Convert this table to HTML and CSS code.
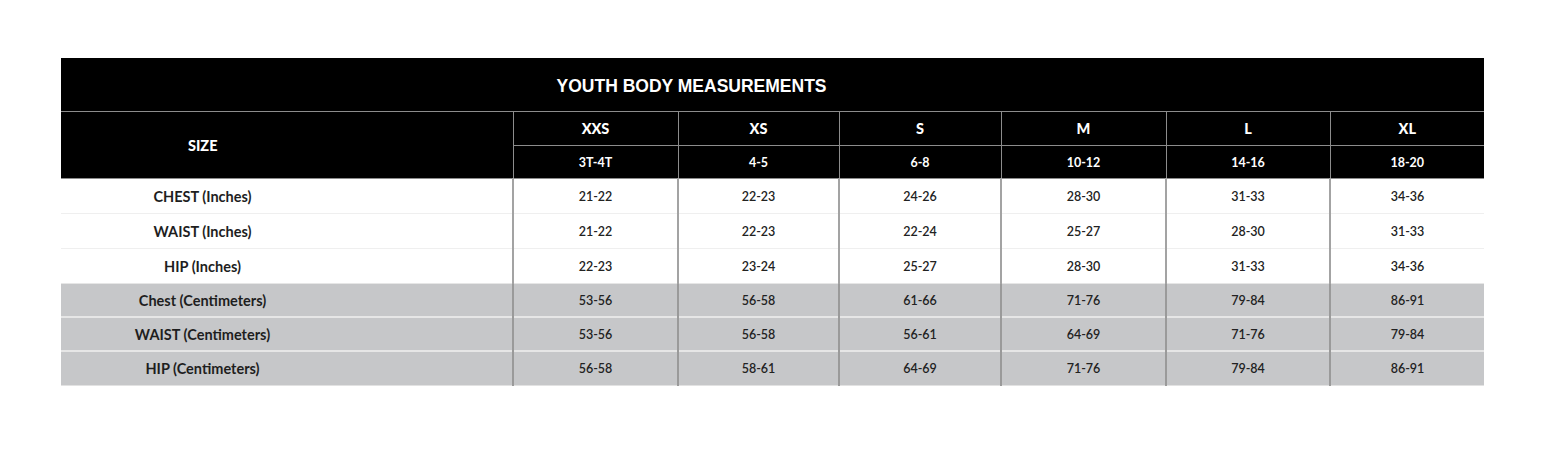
FILE: index.html
```html
<!DOCTYPE html>
<html>
<head>
<meta charset="utf-8">
<link rel="stylesheet" href="styles.css">
</head>
<body>
<div class="page">
<table class="chart">
  <colgroup>
    <col class="c-label">
    <col class="c-xxs">
    <col class="c-xs">
    <col class="c-s">
    <col class="c-m">
    <col class="c-l">
    <col class="c-xl">
  </colgroup>
  <thead>
    <tr class="title-row"><th colspan="7" class="title"><span class="title-text">YOUTH BODY MEASUREMENTS</span></th></tr>
    <tr class="size-row">
      <th rowspan="2" class="size-label">SIZE</th>
      <th>XXS</th><th>XS</th><th>S</th><th>M</th><th>L</th><th>XL</th>
    </tr>
    <tr class="age-row">
      <th>3T-4T</th><th>4-5</th><th>6-8</th><th>10-12</th><th>14-16</th><th>18-20</th>
    </tr>
  </thead>
  <tbody>
    <tr class="in"><th>CHEST (Inches)</th><td>21-22</td><td>22-23</td><td>24-26</td><td>28-30</td><td>31-33</td><td>34-36</td></tr>
    <tr class="in"><th>WAIST (Inches)</th><td>21-22</td><td>22-23</td><td>22-24</td><td>25-27</td><td>28-30</td><td>31-33</td></tr>
    <tr class="in"><th>HIP (Inches)</th><td>22-23</td><td>23-24</td><td>25-27</td><td>28-30</td><td>31-33</td><td>34-36</td></tr>
    <tr class="cm"><th>Chest (Centimeters)</th><td>53-56</td><td>56-58</td><td>61-66</td><td>71-76</td><td>79-84</td><td>86-91</td></tr>
    <tr class="cm"><th>WAIST (Centimeters)</th><td>53-56</td><td>56-58</td><td>56-61</td><td>64-69</td><td>71-76</td><td>79-84</td></tr>
    <tr class="cm"><th>HIP (Centimeters)</th><td>56-58</td><td>58-61</td><td>64-69</td><td>71-76</td><td>79-84</td><td>86-91</td></tr>
  </tbody>
</table>
</div>
</body>
</html>
```
FILE: styles.css
```css
html, body {
  margin: 0;
  padding: 0;
  background: #ffffff;
}
.page {
  padding: 58px 0 0 61px;
}
.chart {
  border-collapse: collapse;
  table-layout: fixed;
  width: 1423px;
  font-family: Lato, "Noto Sans", sans-serif;
  color: #222222;
}
.c-label { width: 452px; }
.c-xxs { width: 165px; }
.c-xs { width: 161px; }
.c-s { width: 162px; }
.c-m { width: 165px; }
.c-l { width: 164px; }
.c-xl { width: 154px; }

.chart th, .chart td {
  padding: 0;
  text-align: center;
  vertical-align: middle;
}

/* header */
.title-row .title {
  background: #000000;
  height: 53px;
  border-bottom: 1px solid #8c8c8c;
  color: #ffffff;
  font-family: "Liberation Sans", Arial, sans-serif;
  font-weight: 700;
  font-size: 17.5px;
  letter-spacing: 0;
  padding-right: 162px;
}
.title-text {
  position: relative;
  top: 2px;
}
.size-row th, .age-row th {
  background: #000000;
  color: #ffffff;
  font-weight: 700;
  border: 1px solid #8c8c8c;
  border-top: none;
}
.size-row th {
  height: 33px;
  font-size: 14.5px;
  font-weight: 900;
}
.age-row th {
  height: 32px;
  font-size: 12.5px;
}
.size-row .size-label {
  border-left: none;
  font-size: 14.5px;
  font-weight: 900;
  padding-right: 168px;
}
.size-row th:last-child, .age-row th:last-child {
  border-right: none;
}

/* body */
.chart tbody th {
  font-weight: 700;
  font-size: 14.5px;
  color: #1e1e1e;
  height: 34px;
  padding-right: 168px;
}
.chart tbody td {
  font-weight: 600;
  font-size: 12.5px;
  color: #222222;
  border-left: 2px solid #a3a3a3;
  height: 34px;
}
.chart tbody tr.in th, .chart tbody tr.in td {
  background: #ffffff;
  border-top: 1px solid #efefef;
}
.chart tbody tr.in:first-child th, .chart tbody tr.in:first-child td {
  border-top: none;
}
.chart tbody tr.cm th, .chart tbody tr.cm td {
  background: #c6c7c9;
  border-top: 2px solid #e6e6e6;
  height: 32px;
}
.chart tbody tr.cm:nth-child(4) th, .chart tbody tr.cm:nth-child(4) td {
  border-top: 1px solid #e6e6e6;
}
.chart tbody tr.cm td {
  border-left: 2px solid #9a9a9a;
}
.chart tbody tr.cm:last-child th, .chart tbody tr.cm:last-child td {
  border-bottom: 1px solid #e2e2e2;
  height: 33px;
}
```
